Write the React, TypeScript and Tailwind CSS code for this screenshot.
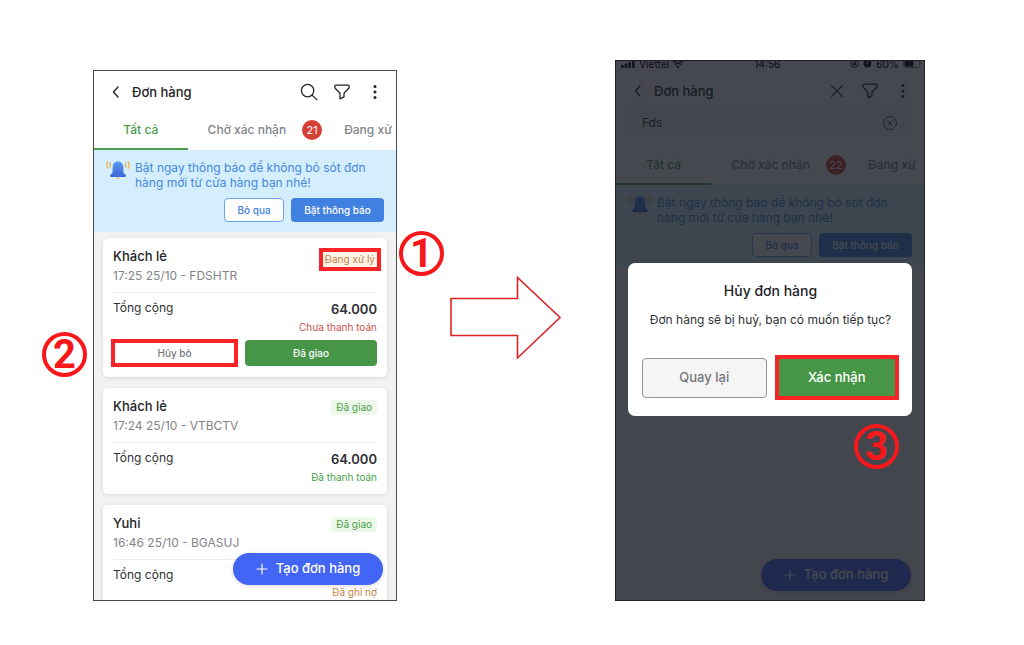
import React from 'react';

type Order = {
  name: string;
  info: string;
  status: string;
  total: string;
  payment: string;
  paymentClass: string;
  pending?: boolean;
};

const orders: Order[] = [
  {
    name: 'Khách lẻ',
    info: '17:25 25/10 - FDSHTR',
    status: 'Đang xử lý',
    total: '64.000',
    payment: 'Chưa thanh toán',
    paymentClass: 'text-[#c9504e]',
    pending: true,
  },
  {
    name: 'Khách lẻ',
    info: '17:24 25/10 - VTBCTV',
    status: 'Đã giao',
    total: '64.000',
    payment: 'Đã thanh toán',
    paymentClass: 'text-[#4a9e4c]',
  },
  {
    name: 'Yuhi',
    info: '16:46 25/10 - BGASUJ',
    status: 'Đã giao',
    total: '',
    payment: 'Đã ghi nợ',
    paymentClass: 'text-[#c98243]',
  },
];

const BackIcon = () => (
  <svg className="h-4 w-4" viewBox="0 0 16 16" fill="none" stroke="currentColor" strokeWidth="1.4" strokeLinecap="round" strokeLinejoin="round">
    <path d="M10 3 5.5 8l4.5 5" />
  </svg>
);

const SearchIcon = () => (
  <svg className="h-5 w-5" viewBox="0 0 20 20" fill="none" stroke="currentColor" strokeWidth="1.3" strokeLinecap="round">
    <circle cx="8.6" cy="8.6" r="6.2" />
    <path d="m13.2 13.2 4.6 4.4" />
  </svg>
);

const CloseIcon = () => (
  <svg className="h-5 w-5" viewBox="0 0 20 20" fill="none" stroke="currentColor" strokeWidth="1.3" strokeLinecap="round">
    <path d="m4.6 4.6 10.8 10.8M15.4 4.6 4.6 15.4" />
  </svg>
);

const FilterIcon = () => (
  <svg className="h-5 w-5" viewBox="0 0 20 20" fill="none" stroke="currentColor" strokeWidth="1.3" strokeLinejoin="round">
    <path d="M3.8 3.2h12.4c.6 0 .9.4.9.9v1.3c0 .5-.2.8-.5 1.1l-4.2 4.2c-.3.3-.4.6-.4 1v3.2L8 16.800v-5.100c0-.4-.1-.7-.4-1L3.400 6.500c-.3-.3-.5-.6-.5-1.100V4.100c0-.5.3-.9.9-.9Z" />
  </svg>
);

const MoreIcon = () => (
  <svg className="h-5 w-5" viewBox="0 0 20 20" fill="currentColor">
    <circle cx="10" cy="4.5" r="1.5" />
    <circle cx="10" cy="10" r="1.5" />
    <circle cx="10" cy="15.5" r="1.5" />
  </svg>
);

const BellIcon = () => (
  <svg className="h-5 w-6 shrink-0" viewBox="0 0 24 20" fill="none">
    <defs>
      <linearGradient id="bell" x1="0" y1="0" x2="0" y2="1">
        <stop offset="0" stopColor="#5b9bef" />
        <stop offset="1" stopColor="#3b66d6" />
      </linearGradient>
    </defs>
    <path d="M10.3 17.500h3.400a1.700 1.700 0 0 1-3.400 0Z" fill="#f3b06a" />
    <path d="M12 1.500c3.200 0 5.200 2.300 5.300 5.300l.2 5.700c.1 1.200 2.500 1.700 2.500 3.200 0 .8-.5 1.200-1.200 1.200H5.200c-.7 0-1.200-.4-1.200-1.200 0-1.500 2.400-2 2.500-3.200l.2-5.700c.1-3 2.100-5.300 5.300-5.300Z" fill="url(#bell)" />
    <path d="M4 2.800c.7 1.300.7 3.100 0 4.400M20 2.800c-.7 1.300-.7 3.100 0 4.400" stroke="#eeb040" strokeWidth="1.300" strokeLinecap="round" />
    <path d="M1.700 1.700c-1 1.800-1 4.500 0 6.400M22.300 1.700c1 1.800 1 4.500 0 6.400" stroke="#eeb040" strokeWidth="1.300" strokeLinecap="round" />
  </svg>
);

const PlusIcon = () => (
  <svg className="h-3 w-3" viewBox="0 0 12 12" fill="none" stroke="currentColor" strokeWidth="1.2" strokeLinecap="round">
    <path d="M6 1v10M1 6h10" />
  </svg>
);

const StatusBar = () => (
  <div className="flex h-[9px] items-center justify-between overflow-hidden pl-1 pr-0.5 text-[10px] font-medium leading-none text-black">
    <div className="-mt-1 flex items-center gap-[3px]">
      <svg className="h-3 w-4" viewBox="0 0 16 12" fill="currentColor">
        <rect x="1" y="7" width="2.6" height="3" rx=".6" />
        <rect x="4.7" y="5.5" width="2.6" height="4.500" rx=".6" />
        <rect x="8.4" y="4" width="2.6" height="6" rx=".6" />
        <rect x="12.1" y="2" width="2.6" height="8" rx=".6" />
      </svg>
      <span>Viettel</span>
      <svg className="h-3 w-3" viewBox="0 0 12 12" fill="none" stroke="currentColor" strokeWidth="1.7">
        <path d="M1 4.500a7.200 7.200 0 0 1 10 0M2.900 6.700a4.500 4.500 0 0 1 6.200 0" />
        <path d="m6 10.600 1.800-2a2.600 2.600 0 0 0-3.600 0Z" fill="currentColor" stroke="none" />
      </svg>
    </div>
    <span className="-mt-1">14:56</span>
    <div className="-mt-1 flex items-center gap-1">
      <svg className="h-[9px] w-[9px]" viewBox="0 0 9 9" fill="none" stroke="currentColor">
        <circle cx="4.5" cy="4.5" r="3.8" />
        <rect x="3" y="4" width="3" height="2.3" fill="currentColor" stroke="none" />
        <path d="M3.500 4V3a1 1 0 0 1 2 0v1" strokeWidth=".7" />
      </svg>
      <svg className="h-[9px] w-[9px]" viewBox="0 0 9 9">
        <circle cx="4.5" cy="4.5" r="3.9" fill="currentColor" />
        <path d="M4.500 2.500v2.200H3" fill="none" stroke="#fff" strokeWidth=".8" />
      </svg>
      <span>60%</span>
      <svg className="h-[9px] w-[19px]" viewBox="0 0 19 9" fill="none">
        <rect x=".5" y=".5" width="16" height="8" rx="2" stroke="currentColor" strokeOpacity=".5" />
        <rect x="1.5" y="1.5" width="9" height="6" rx="1" fill="currentColor" />
        <path d="M17.800 3v3" stroke="currentColor" strokeOpacity=".5" />
      </svg>
    </div>
  </div>
);

const Header: React.FC<{ searching?: boolean }> = ({ searching }) => (
  <header className="flex h-[39px] items-center justify-between pl-3.5 pr-[11px] pt-0.5 text-[#222427]">
    <div className="flex items-center gap-2">
      <button aria-label="Quay lại">
        <BackIcon />
      </button>
      <h1 className="text-[13px] font-medium leading-4">Đơn hàng</h1>
    </div>
    <div className="flex items-center gap-[13px]">
      <button aria-label="Tìm kiếm">{searching ? <CloseIcon /> : <SearchIcon />}</button>
      <button aria-label="Bộ lọc">
        <FilterIcon />
      </button>
      <button aria-label="Thêm">
        <MoreIcon />
      </button>
    </div>
  </header>
);

const Tabs: React.FC<{ count: number }> = ({ count }) => (
  <nav className="flex h-10 overflow-hidden whitespace-nowrap text-xs font-medium leading-4 text-[#828489]">
    <button className="w-[31%] shrink-0 border-b-2 border-[#4a9e4c] pt-0.5 text-[#4a9e4c]">Tất cả</button>
    <button className="ml-5 flex shrink-0 items-center gap-4">
      Chờ xác nhận
      <span className="flex h-5 w-5 items-center justify-center rounded-full bg-[#d63f36] text-[11px] font-normal text-white">
        {count}
      </span>
    </button>
    <button className="ml-[22px] shrink-0">Đang xử</button>
  </nav>
);

const Banner = () => (
  <section className="bg-[#d5eefe] px-3 pb-2.5 pt-2.5">
    <div className="flex gap-[5px]">
      <BellIcon />
      <p className="text-xs leading-[15px] text-[#4488dc]">
        Bật ngay thông báo để không bỏ sót đơn
        <br />
        hàng mới từ cửa hàng bạn nhé!
      </p>
    </div>
    <div className="mt-2 flex justify-end gap-[7px] text-[10px] font-medium">
      <button className="h-6 w-[60px] rounded border border-[#6ba2e4] bg-white text-[#4080dc]">Bỏ qua</button>
      <button className="h-6 w-[93px] rounded bg-[#3f80e0] text-white">Bật thông báo</button>
    </div>
  </section>
);

const OrderCard: React.FC<{ order: Order }> = ({ order }) => (
  <article className="rounded-[5px] bg-white px-2.5 py-2.5 shadow-[0_1px_4px_rgba(0,0,0,0.1)]">
    <div className="flex items-start justify-between border-b border-[#ededee] pb-2">
      <div>
        <h2 className="text-[13px] font-medium leading-4 text-[#222427]">{order.name}</h2>
        <p className="mt-1 text-xs leading-4 text-[#828489]">{order.info}</p>
      </div>
      {order.pending ? (
        <span className="-mr-1 border-4 border-[#fa2427] bg-[#fdf3e7] px-0.5 text-[10px] leading-[15px] text-[#c98243]">
          {order.status}
        </span>
      ) : (
        <span className="mt-0.5 rounded bg-[#edf8ea] px-[5px] text-[10px] leading-[15px] text-[#4a9e4c]">{order.status}</span>
      )}
    </div>
    <div className="flex justify-between pt-[7px] text-xs leading-4 text-[#2f3134]">
      <span>Tổng cộng</span>
      <b className="text-[13px] leading-[18px] font-semibold">{order.total}</b>
    </div>
    <p className={'mt-0.5 text-right text-[10px] leading-[14px] ' + order.paymentClass}>{order.payment}</p>
    {order.pending && (
      <div className="mt-[5px] grid grid-cols-[125fr_132fr] gap-[7px] text-[10px] font-medium">
        <button className="-ml-0.5 h-7 border-4 border-[#fa2427] bg-white text-[#75777c]">Hủy bỏ</button>
        <button className="h-[26px] self-center rounded bg-[#479647] text-white">Đã giao</button>
      </div>
    )}
  </article>
);

const CreateButton = () => (
  <button className="flex h-8 w-[150px] items-center justify-center gap-2 rounded-full bg-[#4265f6] text-[13px] font-medium text-white shadow-[0_1px_4px_rgba(0,0,0,0.15)]">
    <PlusIcon />
    Tạo đơn hàng
  </button>
);

const Step: React.FC<{ n: number }> = ({ n }) => (
  <span className="flex h-[45px] w-[45px] items-center justify-center rounded-full border-4 border-[#f8181b] font-['Roboto',sans-serif] text-[40px] font-bold leading-none text-[#f8181b]">
    {n}
  </span>
);

const CancelDialog = () => (
  <div role="dialog" aria-labelledby="cancel-title" className="relative rounded-[7px] bg-white pb-4 pl-3.5 pr-[13px] pt-5 text-center">
    <h2 id="cancel-title" className="text-sm font-medium leading-4 text-[#222427]">
      Hủy đơn hàng
    </h2>
    <p className="mt-[13px] whitespace-nowrap text-xs leading-4 text-[#2f3134]">Đơn hàng sẽ bị huỷ, bạn có muốn tiếp tục?</p>
    <div className="mt-[27px] grid grid-cols-2 items-center gap-2 text-[13px] font-medium">
      <button className="h-10 rounded border border-[#8c95a1] bg-[#f5f5f5] text-[#75777c]">Quay lại</button>
      <button className="h-[45px] border-4 border-[#fa2427] bg-[#479647] text-white">Xác nhận</button>
    </div>
    <div className="absolute right-[13px] top-full mt-2">
      <Step n={3} />
    </div>
  </div>
);

const App: React.FC = () => {
  return (
    <main className="grid min-h-screen grid-cols-[93fr_304fr_218fr_310fr_99fr] content-start items-end bg-white pt-[60px] font-['Inter',sans-serif]">
      <div className="mr-1.5 mt-[272px] self-start justify-self-end">
        <Step n={2} />
      </div>

      <div className="relative aspect-[304/531] min-w-0 overflow-hidden border border-[#4a4a4a] bg-[#f2f2f3]">
        <div className="bg-white">
          <Header />
          <Tabs count={21} />
        </div>
        <Banner />
        <div className="flex flex-col gap-[11px] px-[9px] pt-1.5">
          {orders.map((order) => (
            <OrderCard key={order.info} order={order} />
          ))}
        </div>
        <div className="absolute bottom-[15px] right-[13px]">
          <CreateButton />
        </div>
      </div>

      <div className="mt-[171px] flex flex-col self-start">
        <div className="ml-0.5">
          <Step n={1} />
        </div>
        <svg className="mx-auto w-28" viewBox="0 0 112 86" fill="none" stroke="#dc2226" strokeWidth="1.6">
          <path d="M1 22.500h66.500v-21L110 41.500 67.500 82V59.500H1Z" />
        </svg>
      </div>

      <div className="relative aspect-[310/541] min-w-0 overflow-hidden border border-[#222] bg-[#f2f2f3]">
        <div className="bg-white">
          <StatusBar />
          <Header searching />
          <div className="px-3">
            <div className="flex h-7 items-center rounded bg-[#f5f5f6] px-3.5">
              <input
                aria-label="Tìm đơn hàng"
                className="min-w-0 flex-1 bg-transparent text-xs leading-4 text-[#2f3134] outline-none"
                defaultValue="Fds"
              />
              <button aria-label="Xóa" className="text-[#55575c]">
                <svg className="h-4 w-4" viewBox="0 0 16 16" fill="none" stroke="currentColor" strokeLinecap="round">
                  <circle cx="8" cy="8" r="6.5" />
                  <path d="m5.700 5.700 4.600 4.600M10.300 5.700l-4.600 4.600" />
                </svg>
              </button>
            </div>
          </div>
          <div className="pt-2">
            <Tabs count={22} />
          </div>
        </div>
        <Banner />
        <div className="absolute bottom-[9px] right-[13px]">
          <CreateButton />
        </div>
        <div className="absolute inset-0 bg-[#161a23]/80 px-3 pt-[202px]">
          <CancelDialog />
        </div>
      </div>
    </main>
  );
};

export default App;
